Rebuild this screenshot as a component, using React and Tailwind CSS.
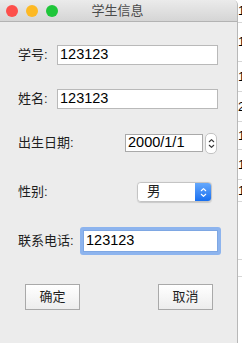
const font = { fontFamily: '"Liberation Sans", "Noto Sans CJK SC", sans-serif' };

const stripRows = [
  { h: 23, t: "1" },
  { h: 39, t: "1" },
  { h: 30, t: "1" },
  { h: 30, t: "2" },
  { h: 28, t: "1" },
  { h: 30, t: "1" },
  { h: 22, t: "1" },
  { h: 58, t: "" },
  { h: 17, t: "" },
  { h: 96, t: "" },
];

function Chevrons({ className }) {
  return (
    <svg viewBox="0 0 8 14" className={className} fill="none" strokeWidth="1.3" strokeLinecap="round" strokeLinejoin="round">
      <path d="M1.5 5 L4 2.5 L6.5 5" />
      <path d="M1.5 9 L4 11.5 L6.5 9" />
    </svg>
  );
}

function TextField({ value, className }) {
  return (
    <div className={"h-[20px] bg-white border border-[#b9b9b9] flex items-center pl-[2px] text-[14.5px] text-black " + className}>
      {value}
    </div>
  );
}

function Label({ children, className }) {
  return <div className={"shrink-0 text-[13px] text-[#1e1e1e] " + className}>{children}</div>;
}

export default function App() {
  return (
    <div className="w-[242px] h-[343px] flex bg-white overflow-hidden" style={font}>
      <div className="w-[238px] h-[343px] shrink-0 flex flex-col bg-[#ececec] border-r border-[#b8b8b8] rounded-tr-[5px] overflow-hidden">
        <div className="h-[22px] shrink-0 relative flex items-center justify-center bg-gradient-to-b from-[#ebebeb] to-[#d5d5d5] border-b border-[#b3b3b3]">
          <div className="absolute left-[6px] top-[5px] flex gap-[8px]">
            <span className="w-[12px] h-[12px] rounded-full bg-[#fd4f4b]" />
            <span className="w-[12px] h-[12px] rounded-full bg-[#fdb924]" />
            <span className="w-[12px] h-[12px] rounded-full bg-[#1fc63a]" />
          </div>
          <span className="text-[13px] text-[#4b4b4b] ml-[-2px]">学生信息</span>
        </div>

        <div className="flex flex-col pl-[18px]">
          <div className="mt-[23px] h-[20px] flex items-center">
            <Label className="w-[39px]">学号:</Label>
            <TextField value="123123" className="w-[161px]" />
          </div>

          <div className="mt-[24px] h-[20px] flex items-center">
            <Label className="w-[39px]">姓名:</Label>
            <TextField value="123123" className="w-[161px]" />
          </div>

          <div className="mt-[23px] h-[22px] flex items-center">
            <Label className="w-[107px]">出生日期:</Label>
            <div className="w-[78px] h-[18px] bg-white border border-[#a9a9a9] flex items-center pl-[2px] text-[14.5px] text-black">
              2000/1/1
            </div>
            <div className="ml-[2px] w-[12px] h-[21px] bg-white border border-[#c3c3c3] rounded-[5px] flex items-center justify-center">
              <Chevrons className="w-[7px] h-[13px] stroke-[#3a3a3a]" />
            </div>
          </div>

          <div className="mt-[27px] h-[22px] flex items-center">
            <Label className="w-[119px]">性别:</Label>
            <div className="w-[75px] h-[20px] flex rounded-[4px] border border-[#c4c4c4] overflow-hidden shadow-[0_0.5px_1px_rgba(0,0,0,0.15)]">
              <div className="flex-1 bg-white flex items-center pl-[9px] text-[13.5px] text-[#1e1e1e]">男</div>
              <div className="w-[16px] bg-gradient-to-b from-[#64a8fc] to-[#166ff0] flex items-center justify-center">
                <Chevrons className="w-[7px] h-[13px] stroke-white" />
              </div>
            </div>
          </div>

          <div className="mt-[24px] h-[28px] flex items-center">
            <Label className="w-[62px]">联系电话:</Label>
            <div className="w-[141px] h-[28px] rounded-[3px] bg-[#8db4ee] p-[3px]">
              <div className="w-full h-full bg-white border border-[#7ea7e3] flex items-center pl-[2px] text-[14.5px] text-black">
                123123
              </div>
            </div>
          </div>

          <div className="mt-[29px] h-[26px] flex items-center">
            <button className="ml-[7px] w-[55px] h-[26px] border border-[#a9a9a9] bg-gradient-to-b from-white to-[#ededed] text-[13px] text-[#1e1e1e]">
              确定
            </button>
            <button className="ml-[78px] w-[55px] h-[26px] border border-[#a9a9a9] bg-gradient-to-b from-white to-[#ededed] text-[13px] text-[#1e1e1e]">
              取消
            </button>
          </div>
        </div>
      </div>

      <div className="flex-1 flex flex-col overflow-hidden">
        {stripRows.map((r, i) => (
          <div
            key={i}
            className="shrink-0 border-b border-[#d6d6d6] flex items-center text-[13px] text-black"
            style={{ height: r.h }}
          >
            {r.t}
          </div>
        ))}
      </div>
    </div>
  );
}
